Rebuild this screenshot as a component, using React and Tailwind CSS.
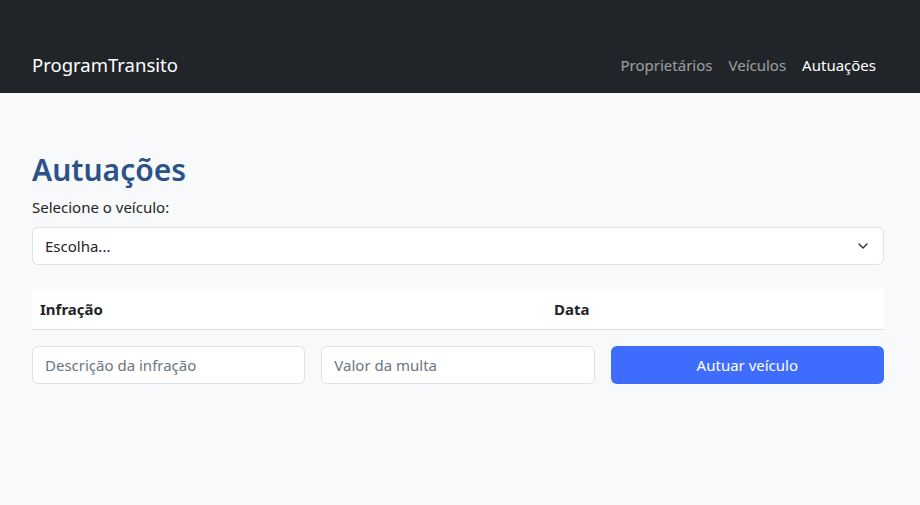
import { ChevronDown } from 'lucide-react';

const font = { fontFamily: '"Noto Sans", "Open Sans", sans-serif' };

function NavBar() {
  return (
    <nav className="h-[93px] bg-[#212529] flex items-end pb-[14px] px-8">
      <div className="flex items-center justify-between w-full">
        <span className="text-[18.5px] text-white">ProgramTransito</span>
        <div className="flex items-center gap-4 pr-3 text-[15px]">
          <a className="text-white/55">Proprietários</a>
          <a className="text-white/55">Veículos</a>
          <a className="text-white">Autuações</a>
        </div>
      </div>
    </nav>
  );
}

export default function App() {
  return (
    <div className="min-h-[505px] bg-[#f8f9fa] text-[#212529]" style={font}>
      <NavBar />
      <main className="pl-8 pr-9 pt-[56px]">
        <h1 className="text-[30px] font-semibold leading-[42px] text-[#2b5289]">Autuações</h1>
        <label className="block mt-[4px] text-[15px] leading-6">Selecione o veículo:</label>
        <div className="mt-[8px] h-[38px] bg-white border border-[#dee2e6] rounded-md flex items-center justify-between pl-3 pr-3">
          <span className="text-[15px]">Escolha...</span>
          <ChevronDown size={16} strokeWidth={2.2} className="text-[#343a40]" />
        </div>
        <div className="mt-6 h-[41px] bg-white border-b border-[#dee2e6] grid grid-cols-[514px_1fr] items-center px-2 text-[15px] font-bold">
          <span>Infração</span>
          <span>Data</span>
        </div>
        <div className="mt-4 grid grid-cols-3 gap-4">
          <input
            placeholder="Descrição da infração"
            className="h-[38px] bg-white border border-[#dee2e6] rounded-md px-3 text-[15px] placeholder:text-[#6c757d] outline-none"
          />
          <input
            placeholder="Valor da multa"
            className="h-[38px] bg-white border border-[#dee2e6] rounded-md px-3 text-[15px] placeholder:text-[#6c757d] outline-none"
          />
          <button className="h-[38px] bg-[#3e6dfd] rounded-md text-white text-[15px]">Autuar veículo</button>
        </div>
      </main>
    </div>
  );
}
